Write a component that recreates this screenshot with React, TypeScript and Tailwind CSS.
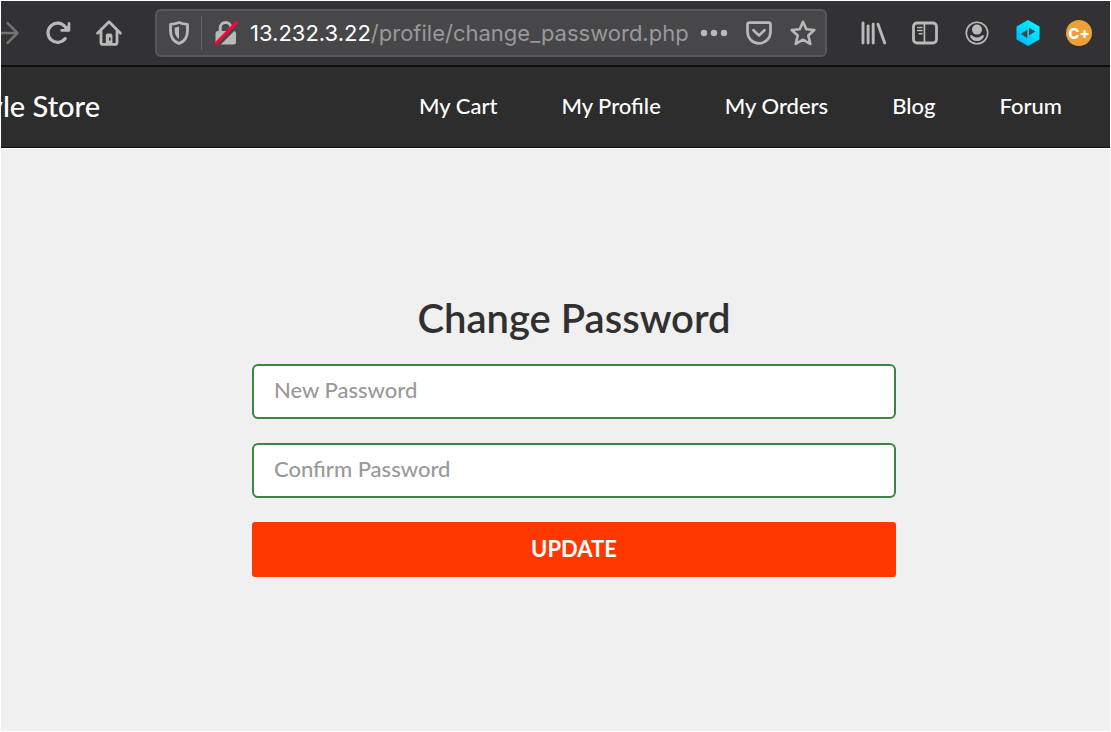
import type { ReactNode } from "react";

const navLinks = ["My Cart", "My Profile", "My Orders", "Blog", "Forum"];

function IconButton({ label, children }: { label: string; children: ReactNode }) {
  return (
    <button type="button" aria-label={label} className="flex h-7 shrink-0 items-center justify-center text-[#b9b9ba]">
      {children}
    </button>
  );
}

function ForwardIcon() {
  return (
    <svg width="18" height="26" viewBox="0 0 18 26" fill="none" stroke="#737374" strokeWidth="2.6" strokeLinecap="round" strokeLinejoin="round">
      <path d="M-3 13H16.2M6.6 3.2L16.4 13L6.6 22.8" />
    </svg>
  );
}

function ReloadIcon() {
  return (
    <svg width="26" height="26" viewBox="0 0 26 26" fill="none" stroke="currentColor" strokeWidth="3.2" strokeLinecap="round" strokeLinejoin="round">
      <path d="M20.2 18.6A9.6 9.6 0 1 1 20 6.6L22.6 9.6" />
      <path d="M24 3.2V10.4H16.6" strokeWidth="2.6" />
      <path d="M24 5V10.4H18.6Z" fill="currentColor" strokeWidth="1" />
    </svg>
  );
}

function HomeIcon() {
  return (
    <svg width="26" height="26" viewBox="0 0 26 26" fill="none" stroke="currentColor" strokeWidth="2.8" strokeLinecap="round" strokeLinejoin="round">
      <path d="M1.6 13.2L13 1.8L24.4 13.2" />
      <path d="M5 11.5V22.4Q5 24.4 7 24.4H19Q21 24.4 21 22.4V11.5" />
      <path d="M9.8 24V15.6Q9.8 13.6 11.8 13.6H14.4Q16.4 13.6 16.4 15.6V24Z" fill="currentColor" stroke="none" />
      <path d="M13.8 18V20" stroke="#323234" strokeWidth="1.6" />
    </svg>
  );
}

function ShieldIcon() {
  return (
    <svg width="20" height="24" viewBox="0 0 20 24" fill="none">
      <path d="M10 1.5C12.8 2.7 15.5 3.2 18.5 3.4V9.4C18.5 15.6 15.6 20.4 10 22.5C4.4 20.4 1.5 15.6 1.5 9.4V3.4C4.5 3.2 7.2 2.7 10 1.5Z" stroke="#b9b9ba" strokeWidth="2.8" strokeLinejoin="round" />
      <path d="M10 5.6V18C7.2 16.2 5.7 13.2 5.7 9.4V6.6C7.2 6.5 8.6 6.2 10 5.6Z" fill="#b9b9ba" />
    </svg>
  );
}

function BrokenLockIcon() {
  return (
    <svg width="24" height="26" viewBox="0 0 24 26" fill="none">
      <path d="M6.2 12V7.8A5.4 5.4 0 0 1 17 7.8V12" stroke="#b9b9ba" strokeWidth="3" />
      <rect x="1.5" y="11" width="20.5" height="13.5" rx="2.5" fill="#b9b9ba" />
      <path d="M3 25.5L24 4.5" stroke="#474749" strokeWidth="4" />
      <path d="M2 23.5L22.4 2.6" stroke="#ff0039" strokeWidth="3.2" strokeLinecap="round" />
    </svg>
  );
}

function DotsIcon() {
  return (
    <svg width="28" height="8" viewBox="0 0 28 8" fill="currentColor">
      <circle cx="4" cy="4" r="3.2" />
      <circle cx="14" cy="4" r="3.2" />
      <circle cx="24" cy="4" r="3.2" />
    </svg>
  );
}

function PocketIcon() {
  return (
    <svg width="26" height="24" viewBox="0 0 26 24" fill="none" stroke="currentColor" strokeWidth="2.7" strokeLinecap="round" strokeLinejoin="round">
      <path d="M3.5 1.6H22.5Q24.5 1.6 24.5 3.6V10.8A11.5 11.5 0 0 1 1.5 10.8V3.6Q1.5 1.6 3.5 1.6Z" />
      <path d="M7.5 9.2L13 14.5L18.5 9.2" />
    </svg>
  );
}

function StarIcon() {
  return (
    <svg width="26" height="26" viewBox="0 0 26 26" fill="none" stroke="currentColor" strokeWidth="2.6" strokeLinejoin="round">
      <path d="M13 1.8L16.3 9.3L24.3 10L18.3 15.5L20.3 24L13 19.7L5.7 24L7.7 15.5L1.7 10L9.7 9.3Z" />
    </svg>
  );
}

function LibraryIcon() {
  return (
    <svg width="26" height="24" viewBox="0 0 26 24" stroke="currentColor" strokeWidth="2.9" strokeLinecap="round">
      <path d="M2 2V22M7.1 5V22M12.2 3.2V22M17 3.2L23.7 22" />
    </svg>
  );
}

function SidebarIcon() {
  return (
    <svg width="26" height="24" viewBox="0 0 26 24" fill="none" stroke="currentColor">
      <rect x="1.5" y="2" width="23" height="20" rx="3.5" strokeWidth="2.8" />
      <path d="M12.4 3V21" strokeWidth="1.7" />
      <path d="M5.6 6.4H10M5.6 9.6H10M7.2 12.8H10" strokeWidth="1.5" strokeLinecap="round" />
    </svg>
  );
}

function AccountIcon() {
  return (
    <svg width="26" height="24" viewBox="-1 0 26 24" fill="none">
      <circle cx="12" cy="12" r="10.7" stroke="currentColor" strokeWidth="1.6" />
      <circle cx="12" cy="8.6" r="5" fill="currentColor" />
      <path d="M5 14.4C6.6 14 7.5 14.8 8.6 15.5Q12 17.3 15.4 15.5C16.5 14.8 17.4 14 19 14.4C18.3 18 15.5 19.9 12 19.9S5.7 18 5 14.4Z" fill="currentColor" />
    </svg>
  );
}

function HexagonIcon() {
  return (
    <svg width="26" height="26" viewBox="-1 0 26 26">
      <defs>
        <linearGradient id="hexagon-fill" x1="1" y1="0" x2="0.2" y2="1">
          <stop offset="0" stopColor="#00ffff" />
          <stop offset="1" stopColor="#00b4ff" />
        </linearGradient>
      </defs>
      <path d="M12 0L23.5 6.5V19.5L12 26L0.5 19.5V6.5Z" fill="url(#hexagon-fill)" />
      <path d="M11.3 9.6V18.2L5 14ZM13 7.4L19.2 11.5L13 15.6Z" fill="#3d474b" />
    </svg>
  );
}

function BrowserToolbar() {
  return (
    <header className="flex h-[66px] items-center border-b-2 border-[#0d0d0d] bg-[#323234] pr-[18px]">
      <div className="flex items-center">
        <IconButton label="Forward"><ForwardIcon /></IconButton>
        <div className="ml-[26px] flex gap-[25px]">
          <IconButton label="Reload"><ReloadIcon /></IconButton>
          <IconButton label="Home"><HomeIcon /></IconButton>
        </div>
      </div>
      <div className="mr-[34px] ml-[33px] flex h-12 min-w-0 flex-1 items-center rounded-md border-2 border-[#58585a] bg-[#474749] pr-[9px] pl-3">
        <IconButton label="Tracking protection"><ShieldIcon /></IconButton>
        <span className="mx-3 h-[34px] w-px bg-[#5f656c]" />
        <IconButton label="Connection is not secure"><BrokenLockIcon /></IconButton>
        <p className="ml-3 min-w-0 flex-1 overflow-hidden font-['Inter',sans-serif] text-[22px] leading-7 whitespace-nowrap text-[#99999a]">
          <span className="text-white">13.232.3.22</span>/profile/change_password.php
        </p>
        <div className="flex items-center gap-[18px]">
          <IconButton label="Page actions"><DotsIcon /></IconButton>
          <IconButton label="Save to Pocket"><PocketIcon /></IconButton>
          <IconButton label="Bookmark"><StarIcon /></IconButton>
        </div>
      </div>
      <div className="flex w-[231px] shrink-0 items-center justify-between">
        <IconButton label="Library"><LibraryIcon /></IconButton>
        <IconButton label="Sidebar"><SidebarIcon /></IconButton>
        <IconButton label="Account"><AccountIcon /></IconButton>
        <IconButton label="Developer extension"><HexagonIcon /></IconButton>
        <button type="button" className="flex size-[26px] items-center justify-center rounded-full bg-[#eda035] font-['Inter',sans-serif] text-[15px] leading-none font-extrabold text-white">
          C+
        </button>
      </div>
    </header>
  );
}

function SiteNav() {
  return (
    <nav className="flex h-[81px] items-center justify-between border-b border-[#111111] bg-[#2d2d2d] pr-12 pb-0.5 text-white">
      <a href="#home" className="flex w-[99px] justify-end overflow-hidden text-[29px] leading-10 font-medium whitespace-nowrap">
        Style Store
      </a>
      <ul className="flex gap-16 text-[22px] leading-8 font-medium">
        {navLinks.map((name) => (
          <li key={name}>
            <a href="#menu">{name}</a>
          </li>
        ))}
      </ul>
    </nav>
  );
}

function PasswordField({ id, label }: { id: string; label: string }) {
  return (
    <div className="relative">
      <input
        id={id}
        type="password"
        aria-label={label}
        placeholder={label}
        className="block h-[55px] w-full rounded-md border-2 border-[#3f8442] bg-white px-5 pb-1 text-[22px] font-medium text-[#2d2d2d] placeholder:text-[#999999] placeholder:opacity-100"
      />
    </div>
  );
}

export default function App() {
  return (
    <div className="flex min-h-screen flex-col border border-white bg-[#f0f0f0] font-['Lato',sans-serif]">
      <BrowserToolbar />
      <SiteNav />
      <main className="flex flex-1 justify-center border-t border-white pt-[145px] pl-[37px]">
        <form className="flex w-full max-w-[644px] flex-col gap-6" onSubmit={(event) => event.preventDefault()}>
          <h1 className="-mb-0.5 text-center text-[40px] leading-[48px] font-semibold text-[#303030]">Change Password</h1>
          <PasswordField id="new-password" label="New Password" />
          <PasswordField id="confirm-password" label="Confirm Password" />
          <button type="submit" className="h-[55px] rounded-[3px] bg-[#ff3802] pb-0.5 text-[22px] font-bold text-white">
            UPDATE
          </button>
        </form>
      </main>
    </div>
  );
}
